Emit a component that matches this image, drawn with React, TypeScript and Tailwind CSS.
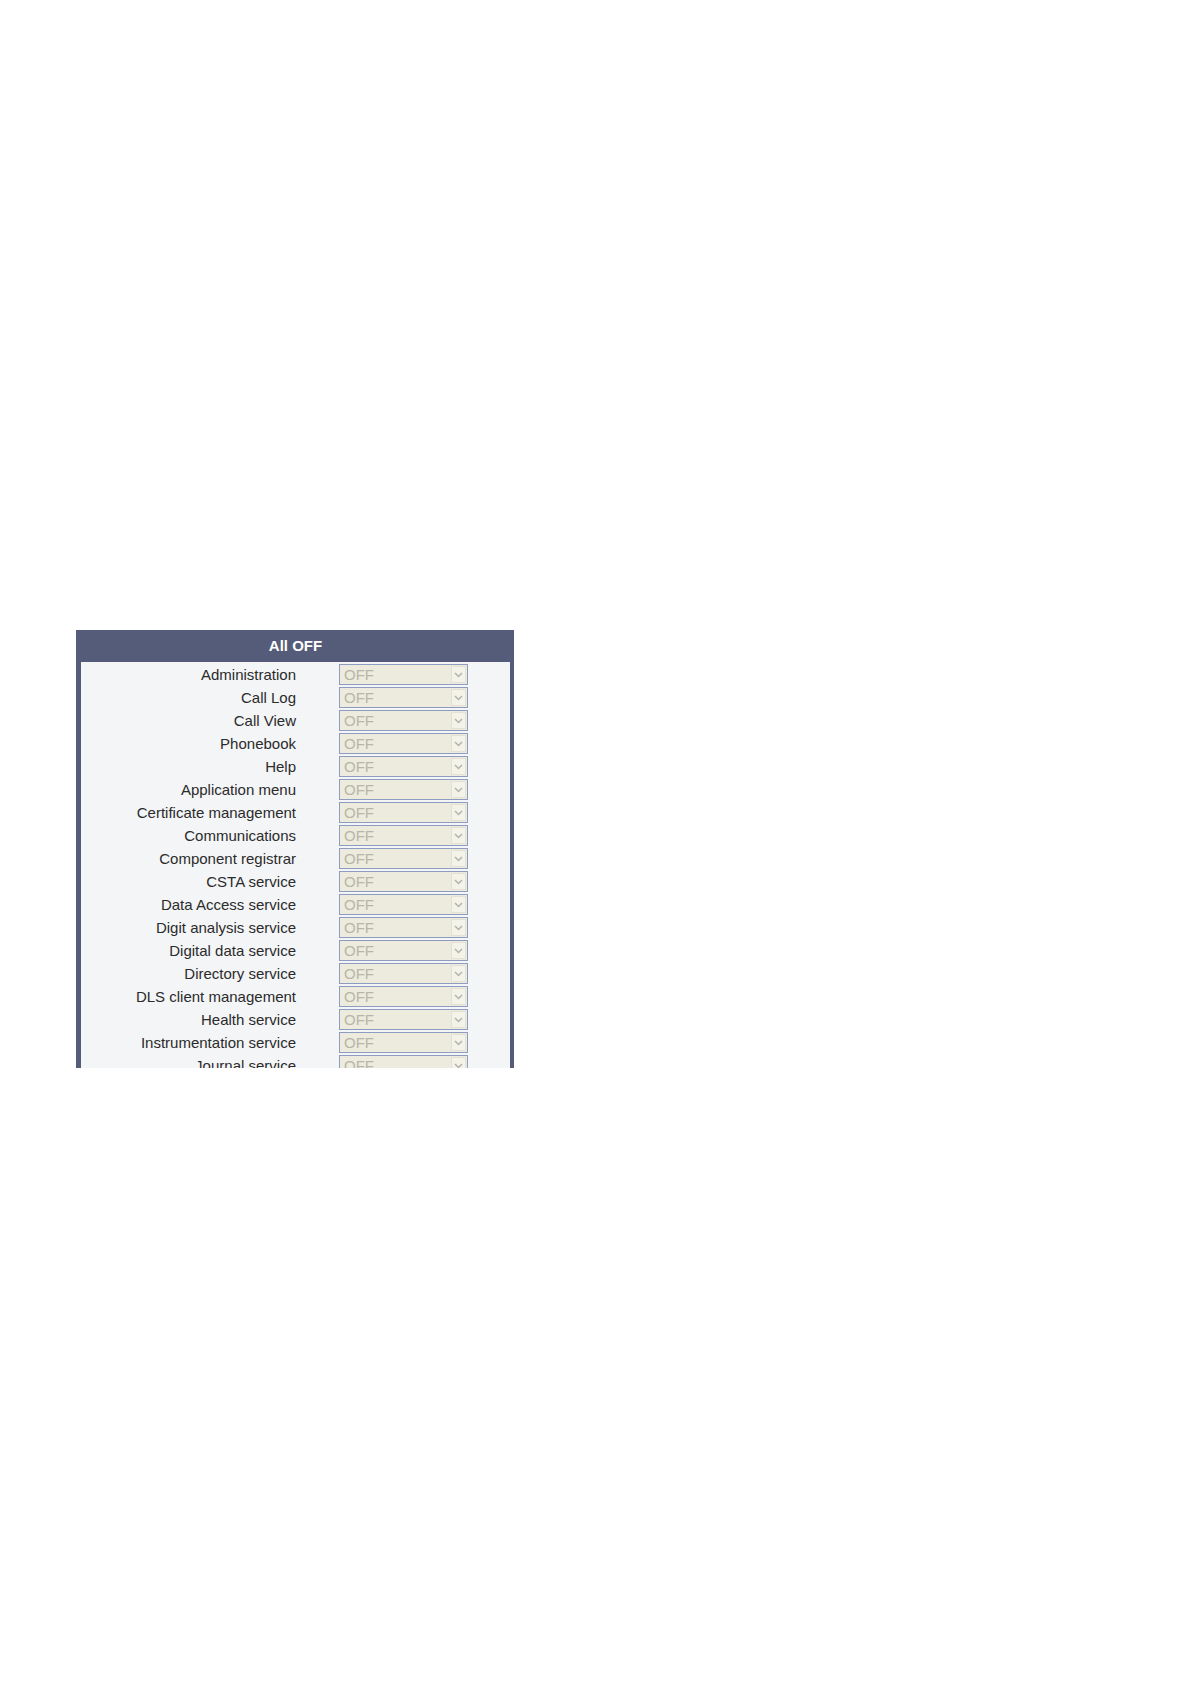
const SERVICES = [
  'Administration',
  'Call Log',
  'Call View',
  'Phonebook',
  'Help',
  'Application menu',
  'Certificate management',
  'Communications',
  'Component registrar',
  'CSTA service',
  'Data Access service',
  'Digit analysis service',
  'Digital data service',
  'Directory service',
  'DLS client management',
  'Health service',
  'Instrumentation service',
  'Journal service',
];

function OffSelect() {
  return (
    <div className="flex h-[21px] w-[129px] items-stretch border border-[#8d9cc0] bg-[#ecebdd] p-px">
      <span className="flex-1 pl-[3px] text-[15px] leading-[17px] text-[#b8b6a8]">OFF</span>
      <span className="flex w-[15px] items-center justify-center border border-[#e2e1d4] bg-[#f4f3ea]">
        <svg width="9" height="6" viewBox="0 0 9 6" fill="none">
          <path d="M1 1l3.5 3.5L8 1" stroke="#b4b3aa" strokeWidth="1.5" />
        </svg>
      </span>
    </div>
  );
}

export default function App() {
  return (
    <div className="min-h-[1684px] w-[1190px] bg-white" style={{ fontFamily: '"Liberation Sans", Arial, sans-serif' }}>
      <div className="pl-[76px] pt-[630px]">
        <div className="h-[438px] w-[438px] overflow-hidden border-l-[5px] border-r-[4px] border-[#555c79] bg-[#f4f5f7]">
          <div className="flex h-[32px] items-center justify-center bg-[#555c79] text-[15px] font-bold text-white">
            All OFF
          </div>
          <div className="pt-px">
            {SERVICES.map(name => (
              <div key={name} className="flex h-[23px] items-center">
                <div className="w-[215px] text-right text-[15px] leading-[17px] text-[#2b2b2b]">{name}</div>
                <div className="ml-[43px]">
                  <OffSelect />
                </div>
              </div>
            ))}
          </div>
        </div>
      </div>
    </div>
  );
}
